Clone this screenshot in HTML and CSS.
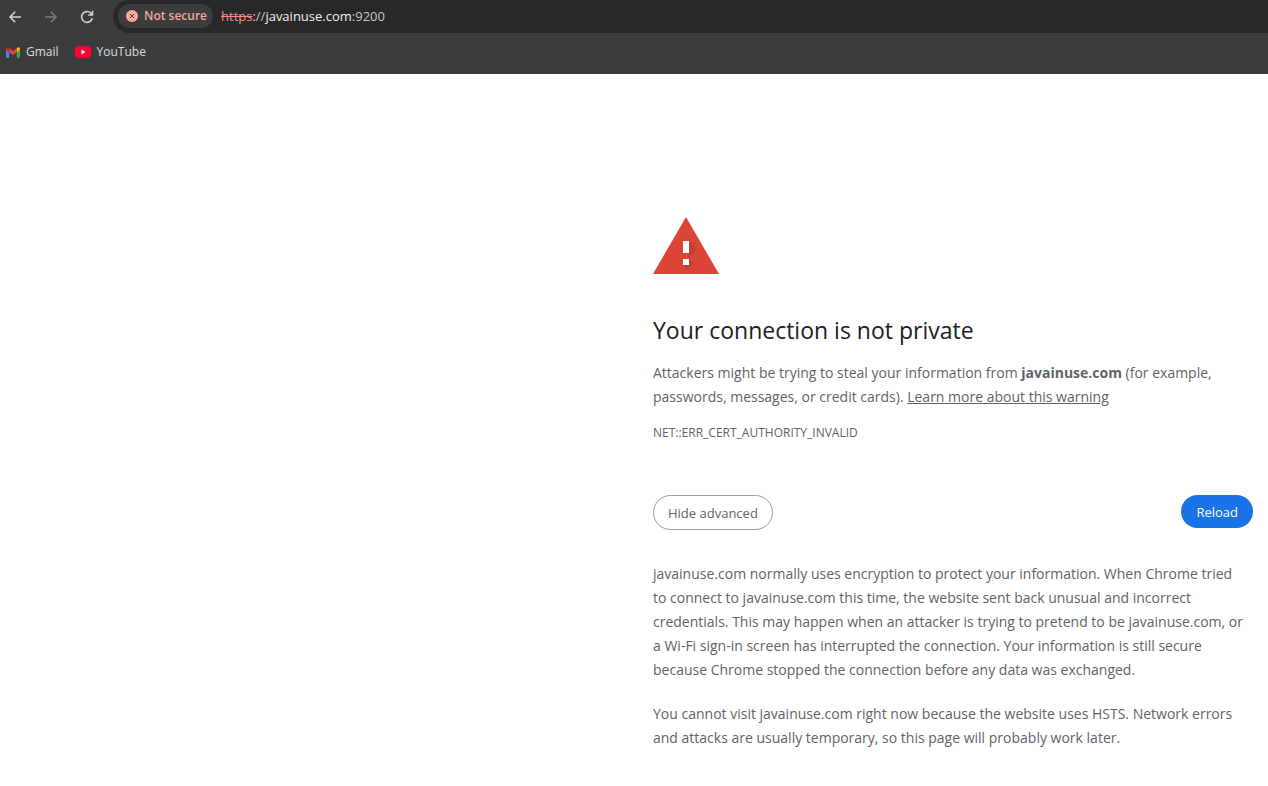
FILE: index.html
```html
<!DOCTYPE html>
<html lang="en">
<head>
    <meta charset="UTF-8">
    <meta name="viewport" content="width=device-width, initial-scale=1.0">
    <title>Privacy error</title>
    <link rel="stylesheet" href="styles.css">
</head>
<body>

    <!-- Browser Bar -->
    <header class="browser">
        <div class="toolbar">
            <button class="nav-button" aria-label="Back">
                <svg viewBox="0 0 16 16"><path d="M14 8H3M8.2 2.8L3 8L8.2 13.2"/></svg>
            </button>
            <button class="nav-button disabled" aria-label="Forward">
                <svg viewBox="0 0 16 16"><path d="M2 8H13M7.8 2.8L13 8L7.8 13.2"/></svg>
            </button>
            <button class="nav-button" aria-label="Refresh">
                <svg viewBox="0 0 16 16"><path d="M13.3 9.2A5.4 5.4 0 1 1 12 4.3L13.3 5.7M13.5 1.8V6H9.3"/></svg>
            </button>
            <div class="address-bar">
                <button class="security">
                    <svg viewBox="0 0 12 12"><circle cx="6" cy="6" r="6"/><path d="M4 4L8 8M8 4L4 8"/></svg>
                    Not secure
                </button>
                <div class="url"><span class="scheme">https</span><span class="dim">://</span>javainuse.com<span class="dim">:9200</span></div>
            </div>
        </div>
        <nav class="bookmarks">
            <a href="#gmail">
                <svg class="gmail" viewBox="0 0 14 11">
                    <path fill="#4285f4" d="M0 2V10a1 1 0 0 0 1 1H3.2V4.4Z"/>
                    <path fill="#34a853" d="M10.8 4.4V11H13a1 1 0 0 0 1-1V2Z"/>
                    <path fill="#ea4335" d="M3.2 1L7 4L10.8 1V5.2L7 8.1L3.2 5.2Z"/>
                    <path fill="#c5221f" d="M0 1.7C0 .1 1.8-.3 3.2 1V5.2L0 2.8Z"/>
                    <path fill="#fbbc04" d="M14 1.7C14 .1 12.2-.3 10.8 1V5.2L14 2.8Z"/>
                </svg>
                Gmail
            </a>
            <a href="#youtube">
                <svg class="youtube" viewBox="0 0 16 12">
                    <rect width="16" height="12" rx="3" fill="#ff0033"/>
                    <path fill="#fff" d="M6.5 3.5L10.5 6L6.5 8.5Z"/>
                </svg>
                YouTube
            </a>
        </nav>
    </header>

    <!-- Warning Page -->
    <main class="warning">
        <svg class="warning-icon" viewBox="0 0 66 57" role="img" aria-label="Warning">
            <path fill="#db4437" d="M33 0L66 57H0Z"/>
            <path fill="#c83e32" d="M36 24L42 30V35L36 40ZM36 42L41 46L36 50L34 52L30 48Z"/>
            <path fill="#fff" d="M30 24H36V36H30ZM30 42H36V48H30Z"/>
        </svg>

        <h1>Your connection is not private</h1>
        <p>Attackers might be trying to steal your information from <strong>javainuse.com</strong> (for example, passwords, messages, or credit cards). <a href="#learn">Learn more about this warning</a></p>
        <div class="error-code">NET::ERR_CERT_AUTHORITY_INVALID</div>

        <div class="buttons">
            <button class="secondary">Hide advanced</button>
            <button class="primary">Reload</button>
        </div>

        <!-- Advanced Details -->
        <div class="details">
            <p>javainuse.com normally uses encryption to protect your information. When Chrome tried<br> to connect to javainuse.com this time, the website sent back unusual and incorrect<br> credentials. This may happen when an attacker is trying to pretend to be javainuse.com, or a Wi-Fi sign-in screen has interrupted the connection. Your information is still secure because Chrome stopped the connection before any data was exchanged.</p>
            <p>You cannot visit javainuse.com right now because the website uses HSTS. Network errors and attacks are usually temporary, so this page will probably work later.</p>
        </div>
    </main>

</body>
</html>
```
FILE: styles.css
```css
/* General Styles */
* {
    box-sizing: border-box;
}

body {
    margin: 0;
    background-color: #fff;
    color: #5f6368;
    font-family: "Segoe UI", "Open Sans", "Noto Sans", sans-serif;
    font-size: 14px;
    line-height: 24px;
}

button {
    border: none;
    padding: 0;
    background: none;
    font-family: inherit;
    cursor: pointer;
}

/* Browser Bar */
.browser {
    background-color: #3c3c3c;
    color: #dcdcdc;
}

.toolbar {
    display: flex;
    align-items: center;
    height: 33px;
}

.nav-button {
    display: flex;
    justify-content: center;
    width: 30px;
    margin-right: 6px;
}

.nav-button svg {
    width: 16px;
    height: 16px;
    fill: none;
    stroke: #d0d0d0;
    stroke-width: 1.6;
}

.nav-button.disabled svg {
    stroke: #7b7b7b;
}

.address-bar {
    flex: 1;
    display: flex;
    align-items: center;
    gap: 8px;
    height: 33px;
    margin-left: 5px;
    padding: 0 0 2px 5px;
    border-radius: 17px 0 0 17px;
    background-color: #282828;
}

.security {
    display: flex;
    align-items: center;
    gap: 6px;
    height: 24px;
    padding: 0 6px 0 8px;
    border-radius: 12px;
    background-color: #3c3c3c;
    color: #f2a9a0;
    font-size: 12px;
    font-weight: 600;
}

.security svg {
    width: 12px;
    height: 12px;
    fill: #f2a9a0;
    stroke: #3c3c3c;
}

.security circle {
    stroke: none;
}

.url {
    color: #f0f0f0;
    font-size: 13px;
}

.url .scheme {
    color: #f28b82;
    text-decoration: line-through;
}

.url .dim {
    color: #c7c7c7;
}

/* Bookmarks */
.bookmarks {
    display: flex;
    gap: 16px;
    height: 41px;
    padding: 7px 6px;
}

.bookmarks a {
    display: flex;
    align-items: center;
    gap: 6px;
    height: 24px;
    color: inherit;
    font-size: 12px;
    text-decoration: none;
}

.gmail {
    width: 14px;
    height: 11px;
}

.youtube {
    width: 16px;
    height: 12px;
}

/* Warning Page */
.warning {
    max-width: 600px;
    margin: 143px 15px 32px auto;
}

.warning-icon {
    display: block;
    width: 66px;
    height: 57px;
}

h1 {
    margin: 39px 0 14px;
    color: #202124;
    font-size: 23px;
    font-weight: 400;
    line-height: 34px;
}

p {
    margin: 0;
}

.warning a {
    color: inherit;
}

.error-code {
    margin-top: 12px;
    font-size: 12px;
}

/* Buttons */
.buttons {
    display: flex;
    justify-content: space-between;
    align-items: flex-start;
    margin-top: 50px;
}

.buttons button {
    height: 33px;
    padding: 0 15px;
    border-radius: 18px;
    font-size: 13px;
}

.buttons .secondary {
    height: 35px;
    padding: 0 14px;
    border: 1px solid #9aa0a6;
    color: #5f6368;
}

.buttons .primary {
    background-color: #1a73e8;
    color: #fff;
}

/* Advanced Details */
.details {
    margin-top: 32px;
}

.details p + p {
    margin-top: 20px;
}
```
